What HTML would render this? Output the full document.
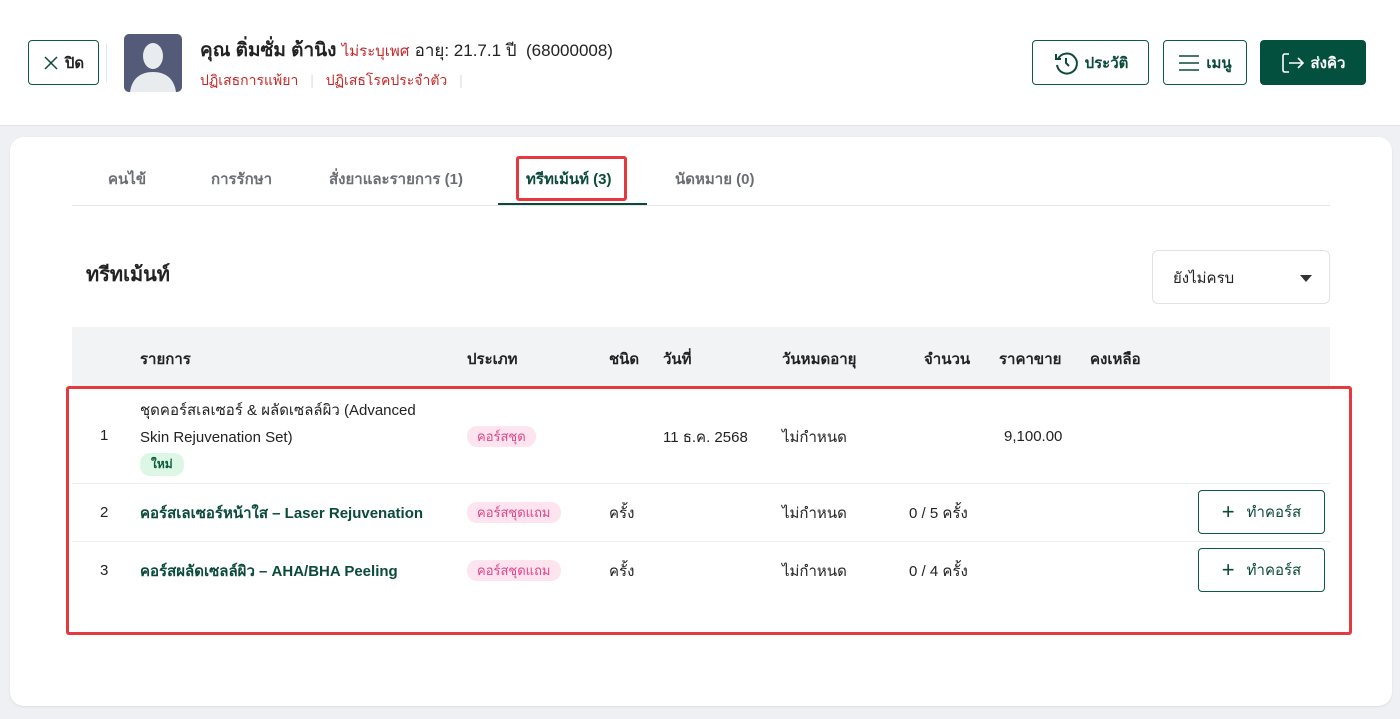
<!DOCTYPE html>
<html><head><meta charset="utf-8"><style>
*{box-sizing:border-box;margin:0;padding:0}
body{width:1400px;height:719px;background:#eef0f3;font-family:"Liberation Sans","Noto Sans CJK SC",sans-serif;color:#222;position:relative;overflow:hidden;font-size:15px}
.a{position:absolute}
.hdr{left:0;top:0;width:1400px;height:126px;background:#fff;border-bottom:1px solid #e2e4e8}
.btn{position:absolute;border:1px solid #0b5a48;border-radius:4px;background:#fff;color:#0b4a3b;display:flex;align-items:center;justify-content:center;gap:6px;font-size:15px;font-weight:bold}
.card{left:10px;top:137px;width:1382px;height:569px;background:#fff;border-radius:14px;box-shadow:0 1px 2px rgba(0,0,0,.08)}
.tab{position:absolute;top:167px;font-size:15px;color:#6b6f75;font-weight:bold}
.th{position:absolute;top:347px;font-size:15px;font-weight:bold;color:#222}
.td{position:absolute;font-size:15px;color:#222}
.pill{position:absolute;background:#fde4ef;color:#e2448a;font-size:13px;border-radius:10px;height:21px;line-height:21px;padding:0 10px}
.g{color:#0b4a3b;font-weight:bold}
</style></head><body>
<div class="a hdr"></div>
<div class="btn" style="left:28px;top:40px;width:71px;height:45px"><svg width="16" height="16" viewBox="0 0 16 16"><path d="M2 2L14 14M14 2L2 14" stroke="#0b4a3b" stroke-width="1.5"/></svg><span style="color:#222">ปิด</span></div>
<div class="a" style="left:106px;top:44px;width:1px;height:38px;background:#e3e5e8"></div>
<div class="a" style="left:124px;top:34px;width:58px;height:58px;background:#535b79;border-radius:5px;overflow:hidden"><svg width="58" height="58" viewBox="0 0 58 58"><ellipse cx="29" cy="22" rx="10" ry="13" fill="#e9ecee"/><path d="M6 58C8 44 17 38 29 38C41 38 50 44 52 58Z" fill="#e9ecee"/></svg></div>
<div class="a" style="left:200px;top:35px;font-size:19px;font-weight:bold;color:#222">คุณ ติ่มซั่ม ต้านิง <span style="font-size:15px;font-weight:normal;color:#c62828">ไม่ระบุเพศ</span> <span style="font-size:17px;font-weight:normal;color:#222">อายุ: 21.7.1 ปี &nbsp;(68000008)</span></div>
<div class="a" style="left:200px;top:70px;font-size:14px;color:#c62828">ปฏิเสธการแพ้ยา <span style="color:#ddd;margin:0 8px">|</span> ปฏิเสธโรคประจำตัว <span style="color:#ddd;margin:0 8px">|</span></div>
<div class="btn" style="left:1032px;top:40px;width:117px;height:45px"><svg width="26" height="26" viewBox="0 0 26 26" fill="none" stroke="#0b4a3b" stroke-width="2"><path d="M5 9A10 10 0 1 1 4 15"/><path d="M3 4V9H8"/><path d="M13 8V13L16 16"/></svg>ประวัติ</div>
<div class="btn" style="left:1163px;top:40px;width:84px;height:45px"><svg width="22" height="18" viewBox="0 0 22 18" stroke="#0b4a3b" stroke-width="1.6"><path d="M1 2H21M1 9H21M1 16H21"/></svg>เมนู</div>
<div class="btn" style="left:1260px;top:40px;width:106px;height:45px;background:#03503e;border-color:#03503e;color:#fff"><svg width="24" height="22" viewBox="0 0 24 22" fill="none" stroke="#fff" stroke-width="1.6"><path d="M8 2H4Q2 2 2 4V18Q2 20 4 20H8"/><path d="M8 11H22M17 6L22 11L17 16"/></svg>ส่งคิว</div>

<div class="a card"></div>
<div class="tab" style="left:108px">คนไข้</div>
<div class="tab" style="left:211px">การรักษา</div>
<div class="tab" style="left:329px">สั่งยาและรายการ (1)</div>
<div class="tab" style="left:526px;color:#0b4a3b">ทรีทเม้นท์ (3)</div>
<div class="tab" style="left:675px">นัดหมาย (0)</div>
<div class="a" style="left:72px;top:205px;width:1258px;height:1px;background:#e3e5e8"></div>
<div class="a" style="left:498px;top:203px;width:149px;height:2px;background:#0b4a3b"></div>
<div class="a" style="left:516px;top:156px;width:111px;height:45px;border:3px solid #e53940;border-radius:3px"></div>

<div class="a" style="left:86px;top:258px;font-size:20px;font-weight:bold">ทรีทเม้นท์</div>
<div class="a" style="left:1152px;top:250px;width:178px;height:54px;border:1px solid #dfe2e6;border-radius:6px;font-size:15px;padding:15px 0 0 20px">ยังไม่ครบ<svg class="a" style="left:147px;top:24px" width="12" height="7"><path d="M0 0H12L6 7Z" fill="#333"/></svg></div>

<div class="a" style="left:72px;top:327px;width:1258px;height:60px;background:#f2f3f5"></div>
<div class="th" style="left:140px">รายการ</div>
<div class="th" style="left:467px">ประเภท</div>
<div class="th" style="left:609px">ชนิด</div>
<div class="th" style="left:663px">วันที่</div>
<div class="th" style="left:782px">วันหมดอายุ</div>
<div class="th" style="left:924px">จำนวน</div>
<div class="th" style="left:999px">ราคาขาย</div>
<div class="th" style="left:1090px">คงเหลือ</div>

<div class="a" style="left:72px;top:483px;width:1258px;height:1px;background:#eceef1"></div>
<div class="a" style="left:72px;top:541px;width:1258px;height:1px;background:#eceef1"></div>

<div class="td" style="left:100px;top:427px">1</div>
<div class="td" style="left:140px;top:397px;line-height:27px">ชุดคอร์สเลเซอร์ &amp; ผลัดเซลล์ผิว (Advanced<br>Skin Rejuvenation Set)</div>
<div class="a" style="left:140px;top:453px;background:#ddf7e6;color:#0b5a3b;font-size:12px;font-weight:bold;border-radius:10px;padding:2px 11px">ใหม่</div>
<div class="pill" style="left:467px;top:426px">คอร์สชุด</div>
<div class="td" style="left:663px;top:425px">11 ธ.ค. 2568</div>
<div class="td" style="left:782px;top:425px">ไม่กำหนด</div>
<div class="td" style="left:1004px;top:428px">9,100.00</div>

<div class="td" style="left:100px;top:504px">2</div>
<div class="td g" style="left:140px;top:501px">คอร์สเลเซอร์หน้าใส – Laser Rejuvenation</div>
<div class="pill" style="left:467px;top:502px">คอร์สชุดแถม</div>
<div class="td" style="left:609px;top:501px">ครั้ง</div>
<div class="td" style="left:782px;top:501px">ไม่กำหนด</div>
<div class="td" style="left:909px;top:501px">0 / 5 ครั้ง</div>
<div class="btn" style="left:1198px;top:490px;width:127px;height:44px;font-weight:normal"><span style="font-size:22px;font-weight:normal;margin-right:6px">+</span>ทำคอร์ส</div>

<div class="td" style="left:100px;top:562px">3</div>
<div class="td g" style="left:140px;top:559px">คอร์สผลัดเซลล์ผิว – AHA/BHA Peeling</div>
<div class="pill" style="left:467px;top:560px">คอร์สชุดแถม</div>
<div class="td" style="left:609px;top:559px">ครั้ง</div>
<div class="td" style="left:782px;top:559px">ไม่กำหนด</div>
<div class="td" style="left:909px;top:559px">0 / 4 ครั้ง</div>
<div class="btn" style="left:1198px;top:548px;width:127px;height:44px;font-weight:normal"><span style="font-size:22px;font-weight:normal;margin-right:6px">+</span>ทำคอร์ส</div>

<div class="a" style="left:66px;top:386px;width:1286px;height:249px;border:3px solid #e53940;border-radius:3px"></div>
</body></html>
